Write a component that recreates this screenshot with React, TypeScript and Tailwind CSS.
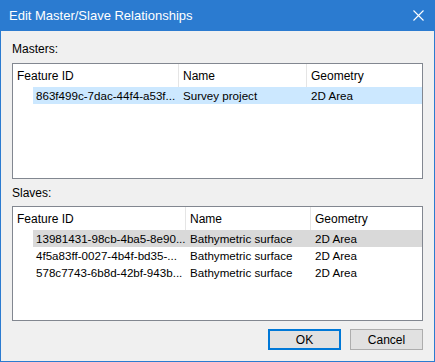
import React from "react";

const font = { fontFamily: '"Liberation Sans", Arial, sans-serif' };

type Row = { id: string; name: string; geom: string };

function ListView({
  cols,
  rows,
  selColor,
  height,
}: {
  cols: [number, number];
  rows: Row[];
  selColor: string;
  height: string;
}) {
  return (
    <div className={`border border-[#828790] bg-white ${height} flex flex-col overflow-hidden`}>
      <div className="flex h-[23px] items-center text-[12px] text-black">
        <div className="h-full flex items-center pl-[4px] border-r border-[#e5e5e5]" style={{ width: cols[0] }}>
          Feature ID
        </div>
        <div className="h-full flex items-center pl-[4px] border-r border-[#e5e5e5]" style={{ width: cols[1] }}>
          Name
        </div>
        <div className="h-full flex items-center pl-[4px] flex-1">Geometry</div>
      </div>
      {rows.map((r, i) => (
        <div key={i} className="flex h-[17px] items-center text-[11.6px] text-black">
          <div className="w-[20px] h-full shrink-0" />
          <div className={`flex flex-1 h-full items-center ${i === 0 ? selColor : ""}`}>
            <div className="pl-[3px] whitespace-nowrap overflow-hidden" style={{ width: cols[0] - 20 }}>
              {r.id}
            </div>
            <div className="pl-[4px] whitespace-nowrap overflow-hidden" style={{ width: cols[1] }}>
              {r.name}
            </div>
            <div className="pl-[4px] whitespace-nowrap">{r.geom}</div>
          </div>
        </div>
      ))}
    </div>
  );
}

export default function App() {
  return (
    <div className="w-[435px] h-[362px] bg-[#2b7bd0] flex flex-col" style={font}>
      <div className="h-[31px] flex items-center justify-between pl-[9px] pr-[11px] text-white text-[13px]">
        <span className="pt-[1px]">Edit Master/Slave Relationships</span>
        <svg width="11" height="11" viewBox="0 0 11 11" className="mb-[1px]">
          <path d="M0.5 0.5 L10.5 10.5 M10.5 0.5 L0.5 10.5" stroke="white" strokeWidth="1.1" />
        </svg>
      </div>
      <div className="flex-1 mx-[1px] mb-[1px] bg-[#f0f0f0] px-[11px] flex flex-col text-[12px] text-black">
        <div className="h-[32px] flex items-center pt-[3px]">Masters:</div>
        <ListView
          cols={[166, 128]}
          height="h-[116px]"
          selColor="bg-[#cce8ff]"
          rows={[{ id: "863f499c-7dac-44f4-a53f...", name: "Survey project", geom: "2D Area" }]}
        />
        <div className="h-[27px] flex items-center pt-[1px]">Slaves:</div>
        <ListView
          cols={[173, 125]}
          height="h-[115px]"
          selColor="bg-[#d9d9d9]"
          rows={[
            { id: "13981431-98cb-4ba5-8e90...", name: "Bathymetric surface", geom: "2D Area" },
            { id: "4f5a83ff-0027-4b4f-bd35-...", name: "Bathymetric surface", geom: "2D Area" },
            { id: "578c7743-6b8d-42bf-943b...", name: "Bathymetric surface", geom: "2D Area" },
          ]}
        />
        <div className="flex justify-end gap-[9px] mt-[8px]">
          <button className="w-[73px] h-[21px] border-2 border-[#0078d7] bg-[#e1e1e1] text-[12px] flex items-center justify-center">
            OK
          </button>
          <button className="w-[73px] h-[21px] border border-[#adadad] bg-[#e1e1e1] text-[12px] flex items-center justify-center">
            Cancel
          </button>
        </div>
      </div>
    </div>
  );
}
